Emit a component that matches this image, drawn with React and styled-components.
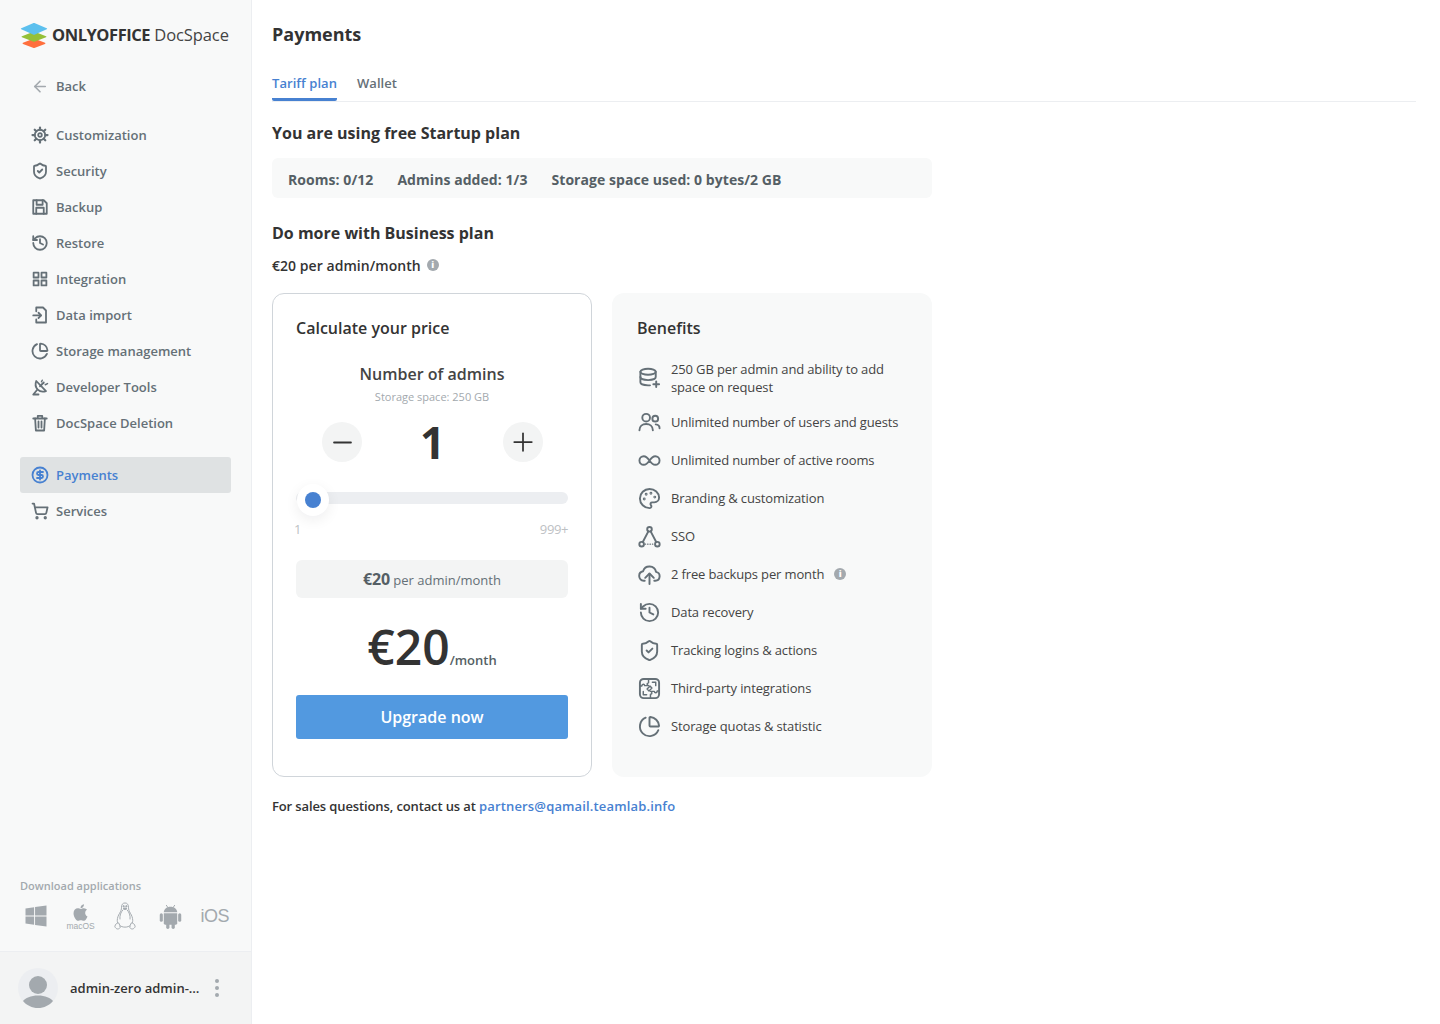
import React from 'react';
import styled, { createGlobalStyle } from 'styled-components';
import { ArrowLeft, ShieldCheck, History, CircleDollarSign, ShoppingCart, Palette, ChartPie, Minus, Plus } from 'lucide-react';
import { FaWindows, FaApple } from 'react-icons/fa';

const GlobalStyle = createGlobalStyle`
	html, body {
		margin: 0;
		padding: 0;
		background: #fff;
		font-family: 'Open Sans', sans-serif;
	}
	* { box-sizing: border-box; }
`;

// hand drawn icons, stroke props come from the caller like lucide ones
const line = { fill: 'none', stroke: 'currentColor', strokeLinecap: 'round', strokeLinejoin: 'round' };

const GearIcon = (props) => (
	<svg viewBox='0 0 24 24' {...line} strokeWidth='2.4' {...props}>
		<circle cx='12' cy='12' r='7' />
		<circle cx='12' cy='12' r='2.4' />
		<path d='M12 2v3M12 19v3M2 12h3M19 12h3M5 5l2 2M17 17l2 2M19 5l-2 2M7 17l-2 2' strokeWidth='3' />
	</svg>
);

const FloppyIcon = (props) => (
	<svg viewBox='0 0 24 24' {...line} strokeWidth='2.4' {...props}>
		<path d='M3 3h14l4 4v14H3z' />
		<path d='M7.500 3v6h8V3' />
		<path d='M7 21v-8h10v8' />
	</svg>
);

const TilesIcon = (props) => (
	<svg viewBox='0 0 24 24' {...line} strokeWidth='2.600' {...props}>
		<rect x='3.500' y='3.500' width='6.500' height='6.500' />
		<rect x='14' y='3.500' width='6.500' height='6.500' />
		<rect x='3.500' y='14' width='6.500' height='6.500' />
		<rect x='14' y='14' width='6.500' height='6.500' />
	</svg>
);

const ImportIcon = (props) => (
	<svg viewBox='0 0 24 24' {...line} strokeWidth='2.4' {...props}>
		<path d='M7 7V2h9l4 4v16H7v-4' />
		<path d='M3 12.500h10' />
		<path d='M10 9l3.500 3.500L10 16' />
	</svg>
);

const DishIcon = (props) => (
	<svg viewBox='0 0 24 24' {...line} strokeWidth='2.4' {...props}>
		<path d='M7 4c-2 5-.5 9 2 11.500s6.500 3.500 11 2z' />
		<path d='M12 11l5-5' />
		<path d='M19 9l3-1.500M15 3l-1 2' strokeWidth='2' />
		<path d='M8 16l-5 6h7' />
	</svg>
);

const TrashIcon = (props) => (
	<svg viewBox='0 0 24 24' {...line} strokeWidth='2.4' {...props}>
		<path d='M3 6h18' />
		<path d='M9 5V2.500h6V5' />
		<path d='M5.500 6l1 16h11l1-16' />
		<path d='M10 10v8M14 10v8' />
	</svg>
);

const DatabaseAddIcon = (props) => (
	<svg viewBox='0 0 24 24' {...line} {...props}>
		<ellipse cx='10.500' cy='6' rx='8' ry='3.200' />
		<path d='M2.500 6v11c0 1.800 3.400 3.200 8 3.200h2' />
		<path d='M2.500 11.500c0 1.800 3.400 3.200 8 3.200s8-1.400 8-3.200V6' />
		<path d='M19 16v6M16 19h6' />
	</svg>
);

const PeopleIcon = (props) => (
	<svg viewBox='0 0 24 24' {...line} {...props}>
		<circle cx='8.500' cy='7' r='4' />
		<circle cx='18' cy='8' r='3' />
		<path d='M1.500 20c0-4 3-6.500 7-6.500s7 2.500 7 6.500' />
		<path d='M18.500 14c2.400.2 4 1.800 4 4' />
	</svg>
);

const LoopIcon = (props) => (
	<svg viewBox='0 0 24 24' {...line} {...props}>
		<path d='M12 12c-2-3-3.800-4.500-6-4.500a4.500 4.500 0 0 0 0 9c2.200 0 4-1.500 6-4.500s3.800-4.500 6-4.500a4.500 4.500 0 0 1 0 9c-2.200 0-4-1.500-6-4.500z' />
	</svg>
);

const NodesIcon = (props) => (
	<svg viewBox='0 0 24 24' {...line} {...props}>
		<circle cx='12' cy='4.500' r='2.400' />
		<circle cx='3.800' cy='20' r='2.400' />
		<circle cx='20.200' cy='20' r='2.400' />
		<path d='M10.800 6.600L5 17.800M13.200 6.600L19 17.800' />
		<path d='M7.500 20h9' strokeWidth='1.200' strokeDasharray='.5 2' />
	</svg>
);

const CloudArrowIcon = (props) => (
	<svg viewBox='0 0 24 24' {...line} {...props}>
		<path d='M7 18.500H6a5 5 0 0 1-.7-9.900A7 7 0 0 1 18.800 9.200 4.700 4.700 0 0 1 18 18.500h-1' />
		<path d='M12 22V11.500' />
		<path d='M7.500 15.500 12 11l4.500 4.500' />
	</svg>
);

const PuzzleIcon = (props) => (
	<svg viewBox='0 0 24 24' {...line} {...props}>
		<rect x='2' y='2' width='20' height='20' rx='4' />
		<path d='M11 2v4c-2 .2-2 2.600 0 3H7c-.3-2-2.800-2-3 .3H2' strokeWidth='1.500' />
		<path d='M13 22v-4c2-.2 2-2.600 0-3h4c.3 2 2.800 2 3-.3h2' strokeWidth='1.500' />
		<path d='M15 5.500h3.500V9M9 18.500H5.500V15' strokeWidth='1.500' />
		<path d='M9.500 12.500l3-3 2 2-3 3z' strokeWidth='1.500' />
	</svg>
);

const PenguinIcon = (props) => (
	<svg viewBox='0 0 24 30' fill='none' stroke='#a3a9ae' strokeWidth='1' {...props}>
		<path d='M12 1C9.400 1 8.400 3 8.400 5.400c0 2.600-.7 4-2 6.300C5 14 4 16.500 4 19c0 4 3.300 7 8 7s8-3 8-7c0-2.500-1-5-2.400-7.300-1.300-2.300-2-3.700-2-6.300C15.600 3 14.600 1 12 1z' />
		<path d='M10 8c-2.400 2.600-3.600 6-3.200 10M14 8c2.400 2.600 3.600 6 3.200 10' />
		<path d='M1.500 25.500c.3-2.800 2.400-4 4-3.800 1 1.400 1.400 3.400 1.500 4.800-1.800 2.400-4.300 1.600-5.500-1zM22.500 25.500c-.3-2.800-2.400-4-4-3.800-1 1.400-1.400 3.400-1.500 4.800 1.800 2.400 4.300 1.600 5.500-1z' fill='#f8f9f9' />
		<path d='M10 6.800c1 1.200 3 1.200 4 0-1-.8-3-.8-4 0z' fill='#a3a9ae' />
		<circle cx='10.600' cy='4.400' r='.7' fill='#a3a9ae' />
		<circle cx='13.400' cy='4.400' r='.7' fill='#a3a9ae' />
	</svg>
);

const AndroidIcon = (props) => (
	<svg viewBox='0 0 24 26' fill='#a3a9ae' {...props}>
		<path d='M5 8.500C5.300 5 8.200 2.800 12 2.800s6.700 2.200 7 5.700z' />
		<path d='M7.500 1l2 3M16.500 1l-2 3' stroke='#a3a9ae' strokeWidth='1' />
		<path d='M5 9.500h14v10.500a1.500 1.500 0 0 1-1.500 1.500h-11A1.500 1.500 0 0 1 5 20z' />
		<rect x='.800' y='9.500' width='3.200' height='9' rx='1.600' />
		<rect x='20' y='9.500' width='3.200' height='9' rx='1.600' />
		<rect x='7.500' y='19' width='3.400' height='7' rx='1.700' />
		<rect x='13.100' y='19' width='3.400' height='7' rx='1.700' />
	</svg>
);

const Logo = () => (
	<svg width='28' height='25' viewBox='0 0 28 25'>
		<path d='M14 15.500 3 19.800c-.6.300-.6.800 0 1.100l10 3.800c.7.300 1.300.3 2 0l10-3.800c.6-.3.600-.8 0-1.100z' fill='#ff6f3d' />
		<path d='M14 8.500 2 13.300c-.6.300-.6.700 0 1l11 4.300c.7.300 1.300.3 2 0l11-4.300c.6-.3.600-.7 0-1z' fill='#95c038' />
		<path d='M14 0c-.4 0-.8.100-1 .2L1.300 5.200c-.6.300-.6.800 0 1.100L13 11.500c.7.300 1.300.3 2 0l11.700-5.200c.6-.3.600-.8 0-1.100L15 .2c-.3-.1-.6-.2-1-.2z' fill='#5cc0ee' />
	</svg>
);

const DefaultAvatar = () => (
	<svg width='40' height='40' viewBox='0 0 40 40'>
		<circle cx='20' cy='20' r='20' fill='#eceef1' />
		<circle cx='20' cy='17' r='9' fill='#a3a9ae' />
		<path d='M5 33c2-3 8-5.500 15-5.500S33 30 35 33c-3.500 4.300-9 7-15 7S8.500 37.300 5 33z' fill='#a3a9ae' />
	</svg>
);

const settingsNav = [
	{ label: 'Customization', icon: GearIcon },
	{ label: 'Security', icon: ShieldCheck },
	{ label: 'Backup', icon: FloppyIcon },
	{ label: 'Restore', icon: History },
	{ label: 'Integration', icon: TilesIcon },
	{ label: 'Data import', icon: ImportIcon },
	{ label: 'Storage management', icon: ChartPie },
	{ label: 'Developer Tools', icon: DishIcon },
	{ label: 'DocSpace Deletion', icon: TrashIcon },
];

const benefits = [
	{ label: '250 GB per admin and ability to add space on request', icon: DatabaseAddIcon, tall: true },
	{ label: 'Unlimited number of users and guests', icon: PeopleIcon },
	{ label: 'Unlimited number of active rooms', icon: LoopIcon },
	{ label: 'Branding & customization', icon: Palette },
	{ label: 'SSO', icon: NodesIcon },
	{ label: '2 free backups per month', icon: CloudArrowIcon, info: true },
	{ label: 'Data recovery', icon: History },
	{ label: 'Tracking logins & actions', icon: ShieldCheck },
	{ label: 'Third-party integrations', icon: PuzzleIcon },
	{ label: 'Storage quotas & statistic', icon: ChartPie },
];

const App = () => {
	return (
		<Page>
			<GlobalStyle />
			<Sidebar>
				<Brand>
					<Logo />
					<BrandName>
						<b>ONLYOFFICE</b> DocSpace
					</BrandName>
				</Brand>
				<BackLink>
					<NavIcon $muted>
						<ArrowLeft size={19} strokeWidth={2.2} />
					</NavIcon>
					Back
				</BackLink>
				<NavGroup>
					{settingsNav.map(({ label, icon: Icon }) => (
						<NavItem key={label}>
							<NavIcon>
								<Icon width={18} height={18} strokeWidth={2.400} />
							</NavIcon>
							{label}
						</NavItem>
					))}
				</NavGroup>
				<NavGroup>
					<NavItem $active>
						<NavIcon>
							<CircleDollarSign size={18} strokeWidth={2.400} />
						</NavIcon>
						Payments
					</NavItem>
					<NavItem>
						<NavIcon>
							<ShoppingCart size={18} strokeWidth={2.400} />
						</NavIcon>
						Services
					</NavItem>
				</NavGroup>
				<Downloads>
					<DownloadsTitle>Download applications</DownloadsTitle>
					<Platforms>
						<FaWindows size={24} />
						<MacBlock>
							<FaApple size={19} />
							<small>macOS</small>
						</MacBlock>
						<PenguinIcon width={24} height={29} />
						<AndroidIcon width={23} height={25} />
						<IosLabel>iOS</IosLabel>
					</Platforms>
				</Downloads>
				<Profile>
					<DefaultAvatar />
					<ProfileName>admin-zero admin-zero</ProfileName>
					<Dots>
						<i />
						<i />
						<i />
					</Dots>
				</Profile>
			</Sidebar>

			<Main>
				<PageTitle>Payments</PageTitle>
				<Tabs>
					<Tab $active>Tariff plan</Tab>
					<Tab>Wallet</Tab>
				</Tabs>
				<Content>
					<SectionTitle>You are using free Startup plan</SectionTitle>
					<UsageBar>
						<span>Rooms: 0/12</span>
						<span>Admins added: 1/3</span>
						<span>Storage space used: 0 bytes/2 GB</span>
					</UsageBar>
					<SectionTitle $spaced>Do more with Business plan</SectionTitle>
					<PlanPrice>
						€20 per admin/month
						<InfoDot>i</InfoDot>
					</PlanPrice>
					<Cards>
						<PriceCard>
							<CardTitle>Calculate your price</CardTitle>
							<CounterTitle>Number of admins</CounterTitle>
							<StorageNote>Storage space: 250 GB</StorageNote>
							<Counter>
								<RoundButton>
									<Minus size={29} strokeWidth={1.500} />
								</RoundButton>
								<CounterValue>1</CounterValue>
								<RoundButton>
									<Plus size={30} strokeWidth={1.400} />
								</RoundButton>
							</Counter>
							<Track>
								<Thumb />
							</Track>
							<TrackLabels>
								<span>1</span>
								<span>999+</span>
							</TrackLabels>
							<UnitPrice>
								<b>€20</b> per admin/month
							</UnitPrice>
							<TotalPrice>
								<strong>€20</strong>
								<span>/month</span>
							</TotalPrice>
							<UpgradeButton>Upgrade now</UpgradeButton>
						</PriceCard>
						<BenefitsCard>
							<CardTitle>Benefits</CardTitle>
							<BenefitList>
								{benefits.map(({ label, icon: Icon, info, tall }) => (
									<Benefit key={label} $tall={tall}>
										<BenefitIcon>
											<Icon width={23} height={23} strokeWidth={2} />
										</BenefitIcon>
										<BenefitText>{label}</BenefitText>
										{info && <InfoDot $wide>i</InfoDot>}
									</Benefit>
								))}
							</BenefitList>
						</BenefitsCard>
					</Cards>
					<SalesLine>
						For sales questions, contact us at <a href='#mail'>partners@qamail.teamlab.info</a>
					</SalesLine>
				</Content>
			</Main>
		</Page>
	);
};

const Page = styled.div`
	display: flex;
	height: 1024px;
	overflow: hidden;
	color: #333;
`;

const Sidebar = styled.aside`
	display: flex;
	flex-direction: column;
	flex: 0 0 252px;
	min-width: 0;
	height: 100%;
	background: #f8f9f9;
	border-right: 1px solid #eceef1;
`;

const Brand = styled.div`
	display: flex;
	align-items: center;
	gap: 4px;
	height: 24px;
	margin: 23px 0 0 20px;
`;

const BrandName = styled.div`
	font-size: 16.500px;
	line-height: 24px;
	color: #444;
	letter-spacing: -0.1px;
	white-space: nowrap;

	b {
		color: #333;
		font-weight: 700;
		letter-spacing: -0.45px;
	}
`;

const NavGroup = styled.nav`
	display: flex;
	flex-direction: column;
	margin: 0 20px 16px;
`;

const NavItem = styled.a`
	display: flex;
	align-items: center;
	gap: 7px;
	height: 36px;
	padding-left: 11px;
	border-radius: 3px;
	font-size: 13px;
	font-weight: 600;
	color: ${(p) => (p.$active ? '#4781d1' : '#657077')};
	background: ${(p) => (p.$active ? '#dfe2e3' : 'transparent')};
`;

const BackLink = styled(NavItem)`
	margin: 21px 20px 13px;
`;

const NavIcon = styled.span`
	display: flex;
	align-items: center;
	justify-content: center;
	width: 18px;
	color: ${(p) => (p.$muted ? '#a3a9ae' : 'inherit')};
`;

const Downloads = styled.div`
	margin-top: auto;
	padding: 0 20px 19px;
`;

const DownloadsTitle = styled.div`
	font-size: 11px;
	font-weight: 600;
	line-height: 16px;
	color: #a3a9ae;
`;

const Platforms = styled.div`
	display: grid;
	grid-template-columns: repeat(5, 44.750px);
	justify-items: center;
	align-items: center;
	height: 32px;
	margin: 6px 0 0 -6.500px;
	color: #a3a9ae;
`;

const MacBlock = styled.div`
	display: flex;
	flex-direction: column;
	align-items: center;

	small {
		font-family: 'Liberation Sans', sans-serif;
		font-size: 8.500px;
		line-height: 8px;
	}
`;

const IosLabel = styled.span`
	font-family: 'Liberation Sans', sans-serif;
	font-size: 18px;
	letter-spacing: -0.5px;
`;

const Profile = styled.div`
	display: flex;
	align-items: center;
	height: 73px;
	padding-left: 18px;
	background: #f3f4f4;
	border-top: 1px solid #eceef1;
`;

const ProfileName = styled.div`
	width: 130px;
	margin-left: 12px;
	font-size: 13px;
	font-weight: 600;
	overflow: hidden;
	white-space: nowrap;
	text-overflow: ellipsis;
`;

const Dots = styled.div`
	display: flex;
	flex-direction: column;
	gap: 3px;
	margin-left: 15px;

	i {
		width: 4px;
		height: 4px;
		border-radius: 50%;
		background: #a3a9ae;
	}
`;

const Main = styled.main`
	flex: 1;
	min-width: 0;
	padding: 0 24px 0 20px;
`;

const PageTitle = styled.h1`
	margin: 0;
	padding-top: 22px;
	font-size: 18px;
	line-height: 24px;
	font-weight: 700;
`;

const Tabs = styled.div`
	display: flex;
	gap: 20px;
	height: 36px;
	margin-top: 20px;
	border-bottom: 1px solid #eceef1;
`;

const Tab = styled.div`
	height: 35px;
	padding-top: 7px;
	font-size: 13px;
	line-height: 20px;
	font-weight: 600;
	letter-spacing: 0.05px;
	color: ${(p) => (p.$active ? '#4781d1' : '#657077')};
	border-bottom: ${(p) => (p.$active ? '3px solid #4781d1' : 'none')};
	border-radius: 0 0 2px 2px;
`;

const Content = styled.div`
	width: 660px;
	padding-top: 20px;
`;

const SectionTitle = styled.h2`
	margin: ${(p) => (p.$spaced ? '24px' : '0')} 0 0;
	font-size: 16px;
	line-height: 22px;
	font-weight: 700;
`;

const UsageBar = styled.div`
	display: flex;
	align-items: center;
	gap: 24px;
	height: 40px;
	margin-top: 14px;
	padding: 2px 16px 0;
	background: #f8f9f9;
	border-radius: 6px;
	font-size: 14px;
	font-weight: 700;
	letter-spacing: 0.06px;
	color: #555f65;
`;

const PlanPrice = styled.div`
	display: flex;
	align-items: center;
	height: 20px;
	margin-top: 11px;
	font-size: 14px;
	font-weight: 600;
	letter-spacing: 0.05px;
	color: #333;
`;

const InfoDot = styled.span`
	display: inline-flex;
	align-items: center;
	justify-content: center;
	width: 12px;
	height: 12px;
	margin-left: ${(p) => (p.$wide ? '10px' : '6px')};
	border-radius: 50%;
	background: #a3a9ae;
	color: #fff;
	font-size: 9px;
	font-weight: 800;
	line-height: 12px;
`;

const Cards = styled.div`
	display: flex;
	gap: 20px;
	height: 484px;
	margin-top: 18px;
`;

const PriceCard = styled.section`
	display: flex;
	flex-direction: column;
	width: 320px;
	padding: 23px 23px 0;
	background: #fff;
	border: 1px solid #d0d5da;
	border-radius: 12px;
`;

const BenefitsCard = styled.section`
	width: 320px;
	padding: 24px 25px 0;
	background: #f8f9f9;
	border-radius: 12px;
`;

const CardTitle = styled.h3`
	margin: 0;
	font-size: 16px;
	line-height: 22px;
	font-weight: 560;
`;

const CounterTitle = styled.div`
	margin-top: 24px;
	text-align: center;
	font-size: 16px;
	line-height: 22px;
	font-weight: 580;
	color: #444;
`;

const StorageNote = styled.div`
	margin-top: 4px;
	text-align: center;
	font-size: 11px;
	line-height: 16px;
	color: #a3a9ae;
`;

const Counter = styled.div`
	display: flex;
	align-items: center;
	justify-content: space-between;
	height: 40px;
	margin-top: 17px;
	padding: 0 25px 0 26px;
`;

const RoundButton = styled.button`
	display: flex;
	align-items: center;
	justify-content: center;
	width: 40px;
	height: 40px;
	padding: 0;
	border: none;
	border-radius: 50%;
	background: #f3f4f4;
	color: #333;
`;

const CounterValue = styled.div`
	font-size: 44px;
	line-height: 44px;
	font-weight: 700;
	color: #333;
`;

const Track = styled.div`
	position: relative;
	height: 12px;
	margin-top: 30px;
	background: #eceef1;
	border-radius: 6px;
`;

const Thumb = styled.div`
	position: absolute;
	left: 1px;
	top: -8px;
	width: 32px;
	height: 32px;
	border-radius: 50%;
	background: #fff;
	box-shadow: 0 4px 14px rgba(4, 15, 27, 0.07);

	&::after {
		content: '';
		position: absolute;
		left: 8px;
		top: 8px;
		width: 16px;
		height: 16px;
		border-radius: 50%;
		background: #4781d1;
	}
`;

const TrackLabels = styled.div`
	display: flex;
	justify-content: space-between;
	margin: 16px 0 0 -2px;
	font-size: 13px;
	line-height: 18px;
	color: #bdc1c4;

	span:last-child {
		letter-spacing: -0.4px;
	}
`;

const UnitPrice = styled.div`
	height: 38px;
	margin-top: 22px;
	background: #f3f4f4;
	border-radius: 6px;
	text-align: center;
	font-size: 13px;
	line-height: 38px;
	color: #657077;

	b {
		font-size: 16px;
		font-weight: 700;
		color: #555f65;
		letter-spacing: -0.2px;
	}
`;

const TotalPrice = styled.div`
	display: flex;
	align-items: baseline;
	justify-content: center;
	height: 72px;
	margin-top: 13px;
	line-height: 72px;

	strong {
		font-size: 48px;
		font-weight: 650;
		color: #333;
	}

	span {
		font-size: 13px;
		font-weight: 600;
		color: #555f65;
	}
`;

const UpgradeButton = styled.button`
	height: 44px;
	margin-top: 12px;
	border: none;
	border-radius: 3px;
	background: #5299e0;
	color: #fff;
	font-family: inherit;
	font-size: 16px;
	font-weight: 600;
`;

const BenefitList = styled.div`
	display: flex;
	flex-direction: column;
	margin-top: 13px;
`;

const Benefit = styled.div`
	display: flex;
	align-items: center;
	height: ${(p) => (p.$tall ? '51px' : '38px')};
`;

const BenefitIcon = styled.span`
	display: flex;
	align-items: center;
	justify-content: center;
	flex: 0 0 24px;
	color: #657077;
`;

const BenefitText = styled.span`
	margin-left: 10px;
	font-size: 13px;
	line-height: 18px;
	letter-spacing: -0.14px;
	color: #444;
`;

const SalesLine = styled.div`
	margin-top: 20px;
	font-size: 13px;
	line-height: 18px;
	font-weight: 600;
	letter-spacing: -0.12px;
	color: #333;

	a {
		color: #4781d1;
		text-decoration: none;
		letter-spacing: 0.15px;
	}
`;

export default App;
